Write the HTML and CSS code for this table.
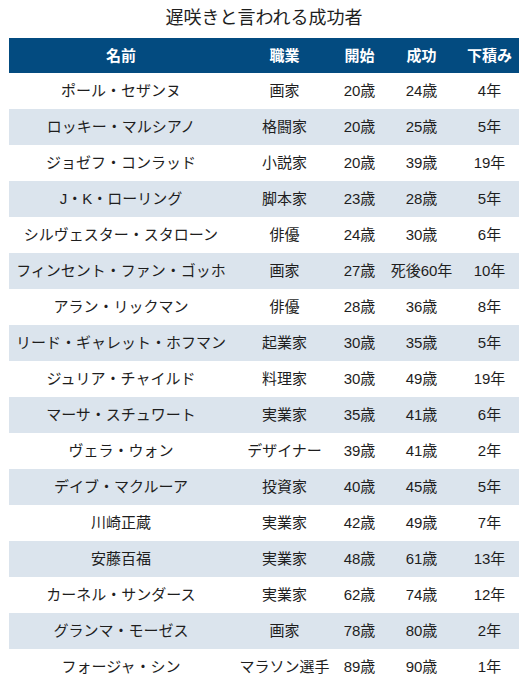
FILE: index.html
```html
<!DOCTYPE html>
<html lang="ja">
<head>
<meta charset="utf-8">
<title>遅咲きと言われる成功者</title>
<link rel="stylesheet" href="styles.css">
</head>
<body>
<div class="page">
  <h1 class="title">遅咲きと言われる成功者</h1>
  <table class="table">
    <colgroup>
      <col class="c-name"><col class="c-job"><col class="c-start"><col class="c-success"><col class="c-years">
    </colgroup>
    <thead>
      <tr><th>名前</th><th>職業</th><th>開始</th><th>成功</th><th>下積み</th></tr>
    </thead>
    <tbody>
      <tr><td>ポール・セザンヌ</td><td>画家</td><td>20歳</td><td>24歳</td><td>4年</td></tr>
      <tr><td>ロッキー・マルシアノ</td><td>格闘家</td><td>20歳</td><td>25歳</td><td>5年</td></tr>
      <tr><td>ジョゼフ・コンラッド</td><td>小説家</td><td>20歳</td><td>39歳</td><td>19年</td></tr>
      <tr><td>J・K・ローリング</td><td>脚本家</td><td>23歳</td><td>28歳</td><td>5年</td></tr>
      <tr><td>シルヴェスター・スタローン</td><td>俳優</td><td>24歳</td><td>30歳</td><td>6年</td></tr>
      <tr><td>フィンセント・ファン・ゴッホ</td><td>画家</td><td>27歳</td><td>死後60年</td><td>10年</td></tr>
      <tr><td>アラン・リックマン</td><td>俳優</td><td>28歳</td><td>36歳</td><td>8年</td></tr>
      <tr><td>リード・ギャレット・ホフマン</td><td>起業家</td><td>30歳</td><td>35歳</td><td>5年</td></tr>
      <tr><td>ジュリア・チャイルド</td><td>料理家</td><td>30歳</td><td>49歳</td><td>19年</td></tr>
      <tr><td>マーサ・スチュワート</td><td>実業家</td><td>35歳</td><td>41歳</td><td>6年</td></tr>
      <tr><td>ヴェラ・ウォン</td><td>デザイナー</td><td>39歳</td><td>41歳</td><td>2年</td></tr>
      <tr><td>デイブ・マクルーア</td><td>投資家</td><td>40歳</td><td>45歳</td><td>5年</td></tr>
      <tr><td>川崎正蔵</td><td>実業家</td><td>42歳</td><td>49歳</td><td>7年</td></tr>
      <tr><td>安藤百福</td><td>実業家</td><td>48歳</td><td>61歳</td><td>13年</td></tr>
      <tr><td>カーネル・サンダース</td><td>実業家</td><td>62歳</td><td>74歳</td><td>12年</td></tr>
      <tr><td>グランマ・モーゼス</td><td>画家</td><td>78歳</td><td>80歳</td><td>2年</td></tr>
      <tr><td>フォージャ・シン</td><td>マラソン選手</td><td>89歳</td><td>90歳</td><td>1年</td></tr>
    </tbody>
  </table>
</div>
</body>
</html>
```
FILE: styles.css
```css
html, body {
  margin: 0;
  padding: 0;
  background: #ffffff;
}

body {
  font-family: "Liberation Sans", "Noto Sans CJK JP", sans-serif;
  color: #1e1e1e;
}

.page {
  padding: 6px 9px 0 9px;
}

.title {
  margin: 0 0 7px 0;
  font-size: 18px;
  font-weight: normal;
  line-height: 25px;
  text-align: center;
}

.table {
  width: 510px;
  border-collapse: collapse;
  table-layout: fixed;
  font-size: 15px;
}

.c-name { width: 224px; }
.c-job { width: 103px; }
.c-start { width: 47px; }
.c-success { width: 77px; }
.c-years { width: 59px; }

.table th {
  background: #034b80;
  color: #ffffff;
  font-weight: bold;
  height: 35px;
  padding: 0 4px;
  text-align: center;
  line-height: 20px;
  white-space: nowrap;
}

.table td {
  height: 36px;
  padding: 0 4px;
  text-align: center;
  line-height: 20px;
  white-space: nowrap;
}

.table tbody tr:nth-child(even) td {
  background: #dbe4ed;
}

.table th, .table td {
  box-sizing: border-box;
}
```
